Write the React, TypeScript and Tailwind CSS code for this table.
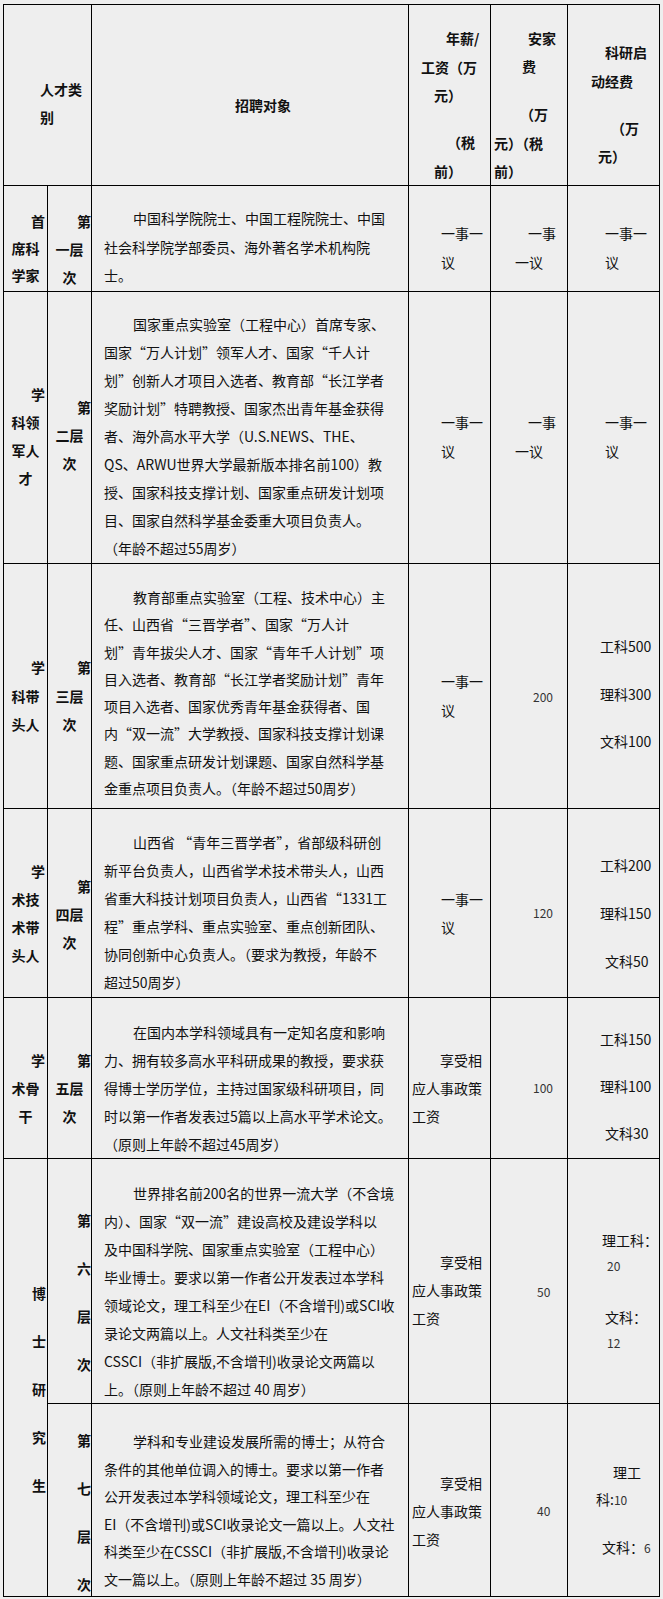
import React from "react";

interface CellProps {
  className?: string;
  children?: React.ReactNode;
}

// one grid cell: right + bottom rule, content placed by padding
const Cell: React.FC<CellProps> = ({ className = "", children }) => {
  return (
    <div className={`border-r border-b border-black whitespace-nowrap ${className}`}>
      {children}
    </div>
  );
};

interface BodyProps {
  lines: string[];
  className?: string;
}

// 招聘对象 text, first line indented two characters
const Body: React.FC<BodyProps> = ({ lines, className = "" }) => {
  return (
    <Cell className={`pl-[12px] text-[14px] ${className}`}>
      {lines.map((l, i) => (
        <div key={i} className={i === 0 ? "pl-[29px]" : ""}>
          {l}
        </div>
      ))}
    </Cell>
  );
};

const row1 = [
  "中国科学院院士、中国工程院院士、中国",
  "社会科学院学部委员、海外著名学术机构院",
  "士。",
];

const row2 = [
  "国家重点实验室（工程中心）首席专家、",
  "国家“万人计划”领军人才、国家“千人计",
  "划”创新人才项目入选者、教育部“长江学者",
  "奖励计划”特聘教授、国家杰出青年基金获得",
  "者、海外高水平大学（U.S.NEWS、THE、",
  "QS、ARWU世界大学最新版本排名前100）教",
  "授、国家科技支撑计划、国家重点研发计划项",
  "目、国家自然科学基金委重大项目负责人。",
  "（年龄不超过55周岁）",
];

const row3 = [
  "教育部重点实验室（工程、技术中心）主",
  "任、山西省“三晋学者”、国家“万人计",
  "划”青年拔尖人才、国家“青年千人计划”项",
  "目入选者、教育部“长江学者奖励计划”青年",
  "项目入选者、国家优秀青年基金获得者、国",
  "内“双一流”大学教授、国家科技支撑计划课",
  "题、国家重点研发计划课题、国家自然科学基",
  "金重点项目负责人。（年龄不超过50周岁）",
];

const row4 = [
  "山西省 “青年三晋学者”，省部级科研创",
  "新平台负责人，山西省学术技术带头人，山西",
  "省重大科技计划项目负责人，山西省“1331工",
  "程”重点学科、重点实验室、重点创新团队、",
  "协同创新中心负责人。（要求为教授，年龄不",
  "超过50周岁）",
];

const row5 = [
  "在国内本学科领域具有一定知名度和影响",
  "力、拥有较多高水平科研成果的教授，要求获",
  "得博士学历学位，主持过国家级科研项目，同",
  "时以第一作者发表过5篇以上高水平学术论文。",
  "（原则上年龄不超过45周岁）",
];

const row6 = [
  "世界排名前200名的世界一流大学（不含境",
  "内）、国家“双一流”建设高校及建设学科以",
  "及中国科学院、国家重点实验室（工程中心）",
  "毕业博士。要求以第一作者公开发表过本学科",
  "领域论文，理工科至少在EI（不含增刊)或SCI收",
  "录论文两篇以上。人文社科类至少在",
  "CSSCI（非扩展版,不含增刊)收录论文两篇以",
  "上。（原则上年龄不超过 40 周岁）",
];

const row7 = [
  "学科和专业建设发展所需的博士；从符合",
  "条件的其他单位调入的博士。要求以第一作者",
  "公开发表过本学科领域论文，理工科至少在",
  "EI（不含增刊)或SCI收录论文一篇以上。人文社",
  "科类至少在CSSCI（非扩展版,不含增刊)收录论",
  "文一篇以上。（原则上年龄不超过 35 周岁）",
];

export default function App() {
  return (
    <div className="min-h-[1599px] bg-[#eeeeee] pl-[3px] pt-[4px] font-['Noto_Sans_CJK_SC',sans-serif] text-[14px] text-[#111]">
      <div className="grid w-[657px] grid-cols-[44px_44px_317px_82px_77px_92px] grid-rows-[181px_106px_272px_245px_189px_161px_245px_193px] border-l border-t border-black leading-[28px]">
        {/* header */}
        <Cell className="col-span-2 pt-[70px] pl-[36px] font-bold">
          <div>人才类</div>
          <div>别</div>
        </Cell>
        <Cell className="pt-[86px] pl-[143px] font-bold">招聘对象</Cell>
        <Cell className="pt-[19px] font-bold">
          <div className="ml-[37px]">年薪/</div>
          <div className="ml-[12px] mt-[1px]">工资（万</div>
          <div className="ml-[25px]">元）</div>
          <div className="ml-[38px] mt-[19px]">（税</div>
          <div className="ml-[25px] mt-[1px]">前）</div>
        </Cell>
        <Cell className="pt-[19px] font-bold">
          <div className="ml-[37px]">安家</div>
          <div className="ml-[31px]">费</div>
          <div className="ml-[29px] mt-[20px]">（万</div>
          <div className="ml-[3px] mt-[1px]">元）（税</div>
          <div className="ml-[3px]">前）</div>
        </Cell>
        <Cell className="pt-[33px] font-bold">
          <div className="ml-[37px]">科研启</div>
          <div className="ml-[23px] mt-[1px]">动经费</div>
          <div className="ml-[43px] mt-[19px]">（万</div>
          <div className="ml-[30px]">元）</div>
        </Cell>

        {/* 第一层次 */}
        <Cell className="pt-[22px] font-bold leading-[27px]">
          <div className="pr-[2px] text-right">首</div>
          <div className="text-center">席科</div>
          <div className="text-center">学家</div>
        </Cell>
        <Cell className="pt-[21px] font-bold">
          <div className="text-right">第</div>
          <div className="text-center">一层</div>
          <div className="text-center">次</div>
        </Cell>
        <Body lines={row1} className="pt-[18px] leading-[28.5px]" />
        <Cell className="pt-[33px] leading-[29px]">
          <div className="ml-[32px]">一事一</div>
          <div className="ml-[32px]">议</div>
        </Cell>
        <Cell className="pt-[33px] leading-[29px]">
          <div className="ml-[37px]">一事</div>
          <div className="ml-[24px]">一议</div>
        </Cell>
        <Cell className="pt-[33px] leading-[29px]">
          <div className="ml-[37px]">一事一</div>
          <div className="ml-[37px]">议</div>
        </Cell>

        {/* 第二层次 */}
        <Cell className="pt-[88px] font-bold">
          <div className="pr-[2px] text-right">学</div>
          <div className="text-center">科领</div>
          <div className="text-center">军人</div>
          <div className="text-center">才</div>
        </Cell>
        <Cell className="pt-[101px] font-bold">
          <div className="text-right">第</div>
          <div className="text-center">二层</div>
          <div className="text-center">次</div>
        </Cell>
        <Body lines={row2} className="pt-[18px]" />
        <Cell className="pt-[116px] leading-[29px]">
          <div className="ml-[32px]">一事一</div>
          <div className="ml-[32px]">议</div>
        </Cell>
        <Cell className="pt-[116px] leading-[29px]">
          <div className="ml-[37px]">一事</div>
          <div className="ml-[24px]">一议</div>
        </Cell>
        <Cell className="pt-[116px] leading-[29px]">
          <div className="ml-[37px]">一事一</div>
          <div className="ml-[37px]">议</div>
        </Cell>

        {/* 第三层次 */}
        <Cell className="pt-[89px] font-bold leading-[28.5px]">
          <div className="pr-[2px] text-right">学</div>
          <div className="text-center">科带</div>
          <div className="text-center">头人</div>
        </Cell>
        <Cell className="pt-[89px] font-bold leading-[28.5px]">
          <div className="text-right">第</div>
          <div className="text-center">三层</div>
          <div className="text-center">次</div>
        </Cell>
        <Body lines={row3} className="pt-[20px] leading-[27.3px]" />
        <Cell className="pt-[103px] leading-[29px]">
          <div className="ml-[32px]">一事一</div>
          <div className="ml-[32px]">议</div>
        </Cell>
        <Cell className="pt-[123px] pl-[42px] text-[12px] leading-[20px] text-[#333]">200</Cell>
        <Cell className="pt-[59px] pl-[32px] leading-[47.5px]">
          <div>工科500</div>
          <div>理科300</div>
          <div>文科100</div>
        </Cell>

        {/* 第四层次 */}
        <Cell className="pt-[48px] font-bold">
          <div className="pr-[2px] text-right">学</div>
          <div className="text-center">术技</div>
          <div className="text-center">术带</div>
          <div className="text-center">头人</div>
        </Cell>
        <Cell className="pt-[63px] font-bold">
          <div className="text-right">第</div>
          <div className="text-center">四层</div>
          <div className="text-center">次</div>
        </Cell>
        <Body lines={row4} className="pt-[19px]" />
        <Cell className="pt-[76px]">
          <div className="ml-[32px]">一事一</div>
          <div className="ml-[32px]">议</div>
        </Cell>
        <Cell className="pt-[94px] pl-[42px] text-[12px] leading-[20px] text-[#333]">120</Cell>
        <Cell className="pt-[32px] pl-[32px] leading-[48px]">
          <div>工科200</div>
          <div>理科150</div>
          <div className="ml-[5px]">文科50</div>
        </Cell>

        {/* 第五层次 */}
        <Cell className="pt-[48px] font-bold">
          <div className="pr-[2px] text-right">学</div>
          <div className="text-center">术骨</div>
          <div className="text-center">干</div>
        </Cell>
        <Cell className="pt-[48px] font-bold">
          <div className="text-right">第</div>
          <div className="text-center">五层</div>
          <div className="text-center">次</div>
        </Cell>
        <Body lines={row5} className="pt-[20px]" />
        <Cell className="pt-[48px]">
          <div className="ml-[31px]">享受相</div>
          <div className="ml-[3px]">应人事政策</div>
          <div className="ml-[3px]">工资</div>
        </Cell>
        <Cell className="pt-[80px] pl-[42px] text-[12px] leading-[20px] text-[#333]">100</Cell>
        <Cell className="pt-[18px] pl-[32px] leading-[47px]">
          <div>工科150</div>
          <div>理科100</div>
          <div className="ml-[5px]">文科30</div>
        </Cell>

        {/* 博士研究生 */}
        <Cell className="row-span-2 flex flex-col items-end gap-[28px] pt-[124px] pr-[1px] font-bold leading-[20px]">
          <div>博</div>
          <div>士</div>
          <div>研</div>
          <div>究</div>
          <div>生</div>
        </Cell>
        <Cell className="flex flex-col items-end gap-[28px] pt-[51px] font-bold leading-[20px]">
          <div>第</div>
          <div>六</div>
          <div>层</div>
          <div>次</div>
        </Cell>
        <Body lines={row6} className="pt-[20px]" />
        <Cell className="pt-[89px]">
          <div className="ml-[31px]">享受相</div>
          <div className="ml-[3px]">应人事政策</div>
          <div className="ml-[3px]">工资</div>
        </Cell>
        <Cell className="pt-[123px] pl-[46px] text-[12px] leading-[20px] text-[#333]">50</Cell>
        <Cell className="pt-[68px] leading-[26px]">
          <div className="ml-[34px]">理工科：</div>
          <div className="ml-[39px] text-[12px] text-[#333]">20</div>
          <div className="ml-[37px] mt-[25px]">文科：</div>
          <div className="ml-[39px] text-[12px] text-[#333]">12</div>
        </Cell>

        {/* 第七层次 */}
        <Cell className="flex flex-col items-end gap-[28px] pt-[26px] font-bold leading-[20px]">
          <div>第</div>
          <div>七</div>
          <div>层</div>
          <div>次</div>
        </Cell>
        <Body lines={row7} className="pt-[24px] leading-[27.6px]" />
        <Cell className="pt-[65px]">
          <div className="ml-[31px]">享受相</div>
          <div className="ml-[3px]">应人事政策</div>
          <div className="ml-[3px]">工资</div>
        </Cell>
        <Cell className="pt-[97px] pl-[46px] text-[12px] leading-[20px] text-[#333]">40</Cell>
        <Cell className="pt-[55px] leading-[27px]">
          <div className="ml-[45px]">理工</div>
          <div className="ml-[28px]">
            科:<span className="text-[12px] text-[#333]">10</span>
          </div>
          <div className="ml-[34px] mt-[21px]">
            文科：<span className="text-[12px] text-[#333]">6</span>
          </div>
        </Cell>
      </div>
    </div>
  );
}
